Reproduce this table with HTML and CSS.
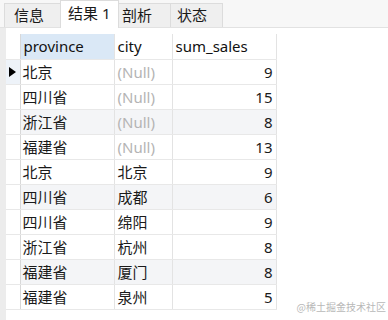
FILE: index.html
```html
<!DOCTYPE html>
<html>
<head>
<meta charset="utf-8">
<link rel="stylesheet" href="styles.css">
</head>
<body>
<div class="tabs">
  <div class="tab t1">信息</div>
  <div class="tab t2 active">结果 1</div>
  <div class="tab t3">剖析</div>
  <div class="tab t4">状态</div>
</div>
<div class="content">
  <div class="gutter"></div>
  <table class="grid">
    <colgroup><col class="c0"><col class="c1"><col class="c2"><col class="c3"></colgroup>
    <thead>
      <tr><th class="rh"></th><th class="sel">province</th><th>city</th><th>sum_sales</th></tr>
    </thead>
    <tbody>
      <tr class="cur"><td class="rh"><span class="arrow"></span></td><td>北京</td><td class="null">(Null)</td><td class="num">9</td></tr>
      <tr><td class="rh"></td><td>四川省</td><td class="null">(Null)</td><td class="num">15</td></tr>
      <tr class="alt"><td class="rh"></td><td>浙江省</td><td class="null">(Null)</td><td class="num">8</td></tr>
      <tr><td class="rh"></td><td>福建省</td><td class="null">(Null)</td><td class="num">13</td></tr>
      <tr><td class="rh"></td><td>北京</td><td>北京</td><td class="num">9</td></tr>
      <tr class="alt"><td class="rh"></td><td>四川省</td><td>成都</td><td class="num">6</td></tr>
      <tr><td class="rh"></td><td>四川省</td><td>绵阳</td><td class="num">9</td></tr>
      <tr><td class="rh"></td><td>浙江省</td><td>杭州</td><td class="num">8</td></tr>
      <tr class="alt"><td class="rh"></td><td>福建省</td><td>厦门</td><td class="num">8</td></tr>
      <tr><td class="rh"></td><td>福建省</td><td>泉州</td><td class="num">5</td></tr>
    </tbody>
  </table>
</div>
<div class="watermark">@稀土掘金技术社区</div>
</body>
</html>
```

FILE: styles.css
```css
html, body {
  margin: 0;
  padding: 0;
}
body {
  width: 388px;
  height: 320px;
  background: #ffffff;
  font-family: "Noto Sans", "Noto Sans CJK SC", sans-serif;
  font-size: 15px;
  color: #1a1a1a;
  position: relative;
  overflow: hidden;
}
.tabs {
  display: flex;
  align-items: flex-end;
  height: 28px;
  padding-left: 4px;
  background: #f7f7f7;
  border-bottom: 1px solid #e2e2e2;
  box-sizing: border-box;
}
.tab {
  height: 24px;
  box-sizing: border-box;
  background: #efefef;
  border: 1px solid #dcdcdc;
  border-bottom: none;
  margin-right: -1px;
  line-height: 22px;
  color: #1a1a1a;
  white-space: nowrap;
  flex: none;
}
.tab.active {
  height: 28px;
  margin-bottom: -1px;
  background: #ffffff;
  line-height: 24px;
}
.t1 { width: 57px; padding-left: 9px; }
.t2 { width: 59px; padding-left: 7px; }
.t3 { width: 53px; padding-left: 3px; }
.t4 { width: 53px; padding-left: 6px; }
.content {
  display: flex;
  height: 292px;
}
.gutter {
  width: 6px;
  background: #ececec;
  flex: none;
}
.grid {
  margin-top: 6px;
  border-collapse: collapse;
  table-layout: fixed;
  width: 270px;
  align-self: flex-start;
}
.c0 { width: 14px; }
.c1 { width: 94px; }
.c2 { width: 58px; }
.c3 { width: 104px; }
.grid th, .grid td {
  height: 25px;
  padding: 0 3px 0 2px;
  border-right: 1px solid #e3e3e3;
  border-bottom: 1px solid #e8e8e8;
  text-align: left;
  font-weight: normal;
  white-space: nowrap;
  overflow: hidden;
  box-sizing: border-box;
}
.grid th {
  color: #111;
  padding-left: 3px;
}
.grid th.sel {
  background: #dae8f6;
}
.grid .rh {
  padding: 0;
  border-right: 1px solid #d8d8d8;
  background: #ffffff;
}
.grid tr.cur .rh {
  background: #eef3f9;
}
.arrow {
  display: block;
  width: 0;
  height: 0;
  margin-left: 3px;
  border-top: 5px solid transparent;
  border-bottom: 5px solid transparent;
  border-left: 7px solid #000;
}
.grid tr.alt td {
  background: #f4f5f7;
}
.grid tr.alt td.rh {
  background: #ffffff;
}
.grid td.null {
  color: #b4b4b4;
  padding-left: 3px;
}
.grid td.num {
  text-align: right;
}
.grid td:nth-child(3) {
  padding-left: 3px;
}
.watermark {
  position: absolute;
  right: 2px;
  bottom: 6px;
  font-size: 10px;
  color: #b8b8b8;
  font-family: "Noto Sans CJK SC", sans-serif;
}
```
